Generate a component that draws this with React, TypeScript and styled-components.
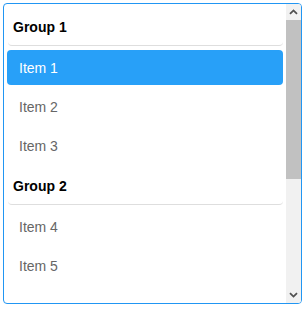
import styled, { createGlobalStyle } from "styled-components";

interface Group {
  label: string;
  items: string[];
}

const groups: Group[] = [
  { label: "Group 1", items: ["Item 1", "Item 2", "Item 3"] },
  { label: "Group 2", items: ["Item 4", "Item 5"] },
];

const GlobalStyle = createGlobalStyle`
  html, body {
    margin: 0;
    padding: 0;
    background: #fff;
  }
  body {
    font-family: "Liberation Sans", Arial, sans-serif;
  }
`;

function Chevron({ down }: { down?: boolean }) {
  return (
    <svg width="9" height="6" viewBox="0 0 9 6">
      <polyline
        points={down ? "1,1.2 4.5,4.6 8,1.2" : "1,4.8 4.5,1.4 8,4.8"}
        fill="none"
        stroke="#505050"
        strokeWidth="1.8"
      />
    </svg>
  );
}

function App() {
  const selected = "Item 1";

  return (
    <Page>
      <GlobalStyle />
      <ListBox>
        <Viewport>
          {groups.map(group => (
            <div key={group.label}>
              <GroupHeader>{group.label}</GroupHeader>
              {group.items.map(item => (
                <Option key={item} $selected={item === selected}>
                  {item}
                </Option>
              ))}
            </div>
          ))}
        </Viewport>
        <ScrollBar>
          <ScrollButton>
            <Chevron />
          </ScrollButton>
          <Track>
            <Thumb />
          </Track>
          <ScrollButton>
            <Chevron down />
          </ScrollButton>
        </ScrollBar>
      </ListBox>
    </Page>
  );
}

const Page = styled.div`
  padding: 3px;
`;

const ListBox = styled.div`
  display: flex;
  width: 299px;
  height: 301px;
  box-sizing: border-box;
  border: 1px solid #2196f3;
  border-radius: 4px;
  overflow: hidden;
  background: #fff;
`;

const Viewport = styled.div`
  flex: 1;
  min-width: 0;
  overflow: hidden;
  padding: 0 3px;
`;

const GroupHeader = styled.div`
  padding: 15px 5px 10px;
  margin-left: 1px;
  line-height: 16px;
  font-size: 14px;
  font-weight: 700;
  color: #000;
  border-bottom: 1px solid #dedede;
  border-radius: 0 0 4px 4px;
`;

const Option = styled.div<{ $selected?: boolean }>`
  height: 35px;
  margin-top: 4px;
  padding: 0 12px;
  display: flex;
  align-items: center;
  font-size: 14px;
  border-radius: 4px;
  color: ${({ $selected }) => ($selected ? "#fff" : "#666")};
  background: ${({ $selected }) => ($selected ? "#28a0f8" : "transparent")};
  cursor: pointer;
`;

const ScrollBar = styled.div`
  width: 15px;
  display: flex;
  flex-direction: column;
  background: #f1f1f1;
`;

const ScrollButton = styled.div`
  height: 16px;
  display: flex;
  align-items: center;
  justify-content: center;
`;

const Track = styled.div`
  flex: 1;
`;

const Thumb = styled.div`
  height: 159px;
  background: #c1c1c1;
`;

export default App;
